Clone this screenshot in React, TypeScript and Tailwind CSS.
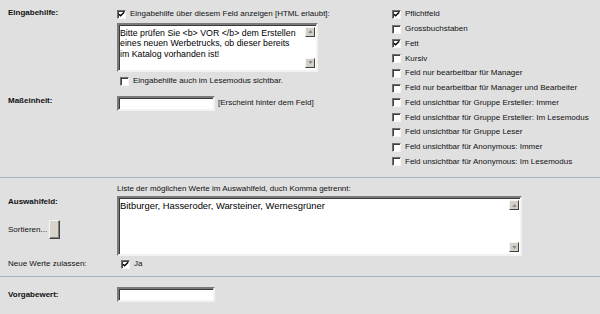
import type { ReactNode } from "react";

const font = "font-['Liberation_Sans',Arial,sans-serif]";

const Checkbox = ({ checked }: { checked?: boolean }) => (
  <span className="relative inline-block w-[9px] h-[9px] shrink-0 bg-white border border-t-[#6f6f6f] border-l-[#6f6f6f] border-b-[#f4f4f4] border-r-[#f4f4f4] shadow-[inset_1px_1px_0_#404040]">
    {checked && (
      <svg viewBox="0 0 9 9" className="absolute -left-px -top-px w-[9px] h-[9px]">
        <path d="M2 4.2 L3.6 5.8 L7.2 2.2" stroke="#000" strokeWidth="1.4" fill="none" />
      </svg>
    )}
  </span>
);

const CheckRow = ({ checked, children }: { checked?: boolean; children: ReactNode }) => (
  <div className="flex items-center gap-[4px] h-[14.75px] text-[8px] leading-[12px]">
    <Checkbox checked={checked} />
    <span>{children}</span>
  </div>
);

const ScrollBtn = ({ up }: { up?: boolean }) => (
  <div className="w-[10px] h-[10px] bg-[#d4d0c8] border border-t-[#f4f4f4] border-l-[#f4f4f4] border-b-[#404040] border-r-[#404040] flex items-center justify-center">
    <svg viewBox="0 0 6 4" className="w-[5px] h-[3px]">
      <path d={up ? "M3 0 L6 4 L0 4 Z" : "M0 0 L6 0 L3 4 Z"} fill="#8a8a8a" />
    </svg>
  </div>
);

const TextArea = ({ width, height, textSize, children }: { width: string; height: string; textSize: string; children: ReactNode }) => (
  <div className={`${width} ${height} flex bg-white border-2 border-t-[#7a7a7a] border-l-[#7a7a7a] border-b-[#f2f2f2] border-r-[#f2f2f2] shadow-[inset_1px_1px_0_#3a3a3a]`}>
    <div className={`flex-1 pl-[1px] pt-[3px] ${textSize} leading-[10.7px] text-black whitespace-nowrap overflow-hidden`}>{children}</div>
    <div className="w-[11px] flex flex-col justify-between py-[2px] pr-[1px]">
      <ScrollBtn up />
      <ScrollBtn />
    </div>
  </div>
);

const Input = () => (
  <div className="w-[98px] h-[15px] bg-white border-2 border-t-[#7a7a7a] border-l-[#7a7a7a] border-b-[#f2f2f2] border-r-[#f2f2f2] shadow-[inset_1px_1px_0_#3a3a3a]" />
);

const Label = ({ children }: { children: ReactNode }) => (
  <div className="w-[117px] shrink-0 pl-[8px] text-[8px] leading-[12px] font-bold">{children}</div>
);

const options: [string, boolean][] = [
  ["Pflichtfeld", true],
  ["Grossbuchstaben", false],
  ["Fett", true],
  ["Kursiv", false],
  ["Feld nur bearbeitbar für Manager", false],
  ["Feld nur bearbeitbar für Manager und Bearbeiter", false],
  ["Feld unsichtbar für Gruppe Ersteller: Immer", false],
  ["Feld unsichtbar für Gruppe Ersteller: Im Lesemodus", false],
  ["Feld unsichtbar für Gruppe Leser", false],
  ["Feld unsichtbar für Anonymous: Immer", false],
  ["Feld unsichtbar für Anonymous: Im Lesemodus", false],
];

export default function App() {
  return (
    <div className={`${font} w-[600px] h-[314px] bg-[#e0e0e0] text-[#111] overflow-hidden`}>
      {/* Eingabehilfe / Maßeinheit */}
      <div className="h-[178px] flex border-b border-[#9fb7bf]">
        <div className="w-[392px] shrink-0">
          <div className="flex pt-[7px]">
            <Label>Eingabehilfe:</Label>
            <div className="flex flex-col">
              <CheckRow checked>Eingabehilfe über diesem Feld anzeigen [HTML erlaubt]:</CheckRow>
              <div className="mt-[1px]">
                <TextArea width="w-[201px]" height="h-[49px]" textSize="text-[8.8px]">
                  Bitte prüfen Sie &lt;b&gt; VOR &lt;/b&gt; dem Erstellen
                  <br />
                  eines neuen Werbetrucks, ob dieser bereits
                  <br />
                  im Katalog vorhanden ist!
                </TextArea>
              </div>
              <div className="mt-[2px] pl-[3px]">
                <CheckRow>Eingabehilfe auch im Lesemodus sichtbar.</CheckRow>
              </div>
            </div>
          </div>
          <div className="flex items-start mt-[6px]">
            <Label>Maßeinheit:</Label>
            <div className="flex items-center gap-[3px] mt-[1px]">
              <Input />
              <span className="text-[8px] leading-[12px]">[Erscheint hinter dem Feld]</span>
            </div>
          </div>
        </div>
        <div className="pt-[7px]">
          {options.map(([t, c]) => (
            <CheckRow key={t} checked={c}>{t}</CheckRow>
          ))}
        </div>
      </div>

      {/* Auswahlfeld */}
      <div className="h-[99px] border-b border-[#9fb7bf] pt-[5px]">
        <div className="flex">
          <div className="w-[117px] shrink-0" />
          <div className="text-[8px] leading-[12px]">Liste der möglichen Werte im Auswahlfeld, duch Komma getrennt:</div>
        </div>
        <div className="flex mt-[1px]">
          <div className="w-[117px] shrink-0">
            <div className="pl-[8px] text-[8px] leading-[12px] font-bold">Auswahlfeld:</div>
            <div className="flex items-center gap-[2px] pl-[8px] mt-[12px]">
              <span className="text-[8px] leading-[12px]">Sortieren...</span>
              <div className="w-[11px] h-[19px] bg-[#d8d4cc] border border-t-[#f4f4f4] border-l-[#f4f4f4] border-b-[#404040] border-r-[#404040] shadow-[inset_-1px_-1px_0_#808080]" />
            </div>
          </div>
          <TextArea width="w-[405px]" height="h-[60px]" textSize="text-[9.4px]">
            Bitburger, Hasseroder, Warsteiner, Wernesgrüner
          </TextArea>
        </div>
        <div className="flex items-center mt-[1px]">
          <div className="w-[117px] shrink-0 pl-[8px] text-[8px] leading-[12px]">Neue Werte zulassen:</div>
          <div className="pl-[4px]">
            <CheckRow checked>Ja</CheckRow>
          </div>
        </div>
      </div>

      {/* Vorgabewert */}
      <div className="flex items-center pt-[10px]">
        <Label>Vorgabewert:</Label>
        <Input />
      </div>
    </div>
  );
}
